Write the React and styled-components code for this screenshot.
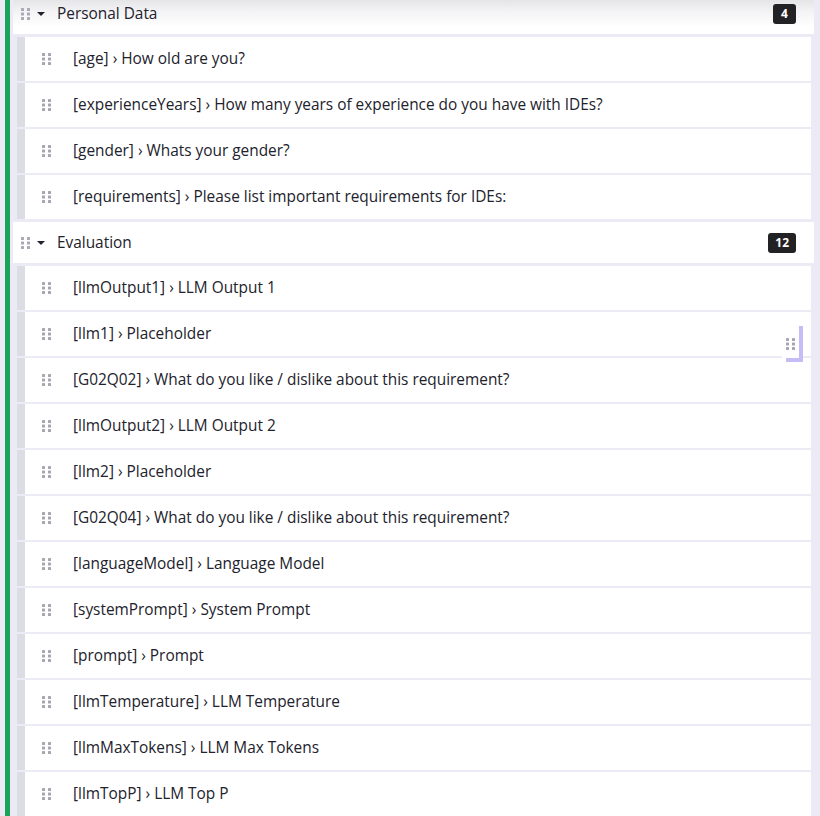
import React from "react";
import styled, { createGlobalStyle } from "styled-components";

const GlobalStyle = createGlobalStyle`
    html, body {
        margin: 0;
        padding: 0;
        background: #ecebf5;
        overflow: hidden;
    }
    body {
        font-family: "Open Sans", "Noto Sans", "Liberation Sans", sans-serif;
        color: #22222c;
    }
`;

const Page = styled.div`
    height: 816px;
    padding-left: 5px;
    box-sizing: border-box;
    overflow: hidden;
`;

const Board = styled.div`
    position: relative;
    min-height: 100%;
    border-left: 5px solid #1aa45b;
    padding: 0 6px 0 3px;
    margin-top: -7px;
    display: flex;
    flex-direction: column;
    gap: 3px;
`;

const Section = styled.section`
    display: flex;
    flex-direction: column;
    gap: 2px;
`;

const Header = styled.div`
    height: 41px;
    margin-bottom: 1px;
    display: flex;
    align-items: center;
    padding: 0 18px 0 8px;
    background: ${(p) =>
        p.$shaded
            ? "linear-gradient(#dcdce0 0px, #f3f3f5 18px, #ffffff 34px)"
            : "#ffffff"};
    font-size: 15.4px;
`;

const Caret = styled.span`
    width: 0;
    height: 0;
    margin: 0 12px 0 7px;
    border-left: 4px solid transparent;
    border-right: 4px solid transparent;
    border-top: 4px solid #22222c;
`;

const Title = styled.span`
    flex: 1;
    padding-bottom: 1px;
`;

const Badge = styled.span`
    min-width: 23px;
    height: 20px;
    padding: 0 7px;
    box-sizing: border-box;
    border-radius: 3px;
    background: #222224;
    color: #ffffff;
    font-size: 12px;
    font-weight: 700;
    display: flex;
    align-items: center;
    justify-content: center;
`;

const Row = styled.div`
    position: relative;
    height: 44px;
    margin: 0 3px 0 4px;
    display: flex;
    align-items: center;
    background: #ffffff;
    border-left: 8px solid #dcdce5;
    font-size: 15.4px;
`;

const RowHandle = styled.span`
    display: flex;
    margin: 0 22px 0 17px;
`;

const Label = styled.span`
    white-space: nowrap;
    padding-bottom: 1px;
`;

const DropMarker = styled.div`
    position: absolute;
    right: 8px;
    top: 14px;
    width: 21px;
    height: 36px;
    padding: 8px 0 0 4px;
    box-sizing: border-box;
    background: #ffffff;
    border-right: 4px solid #c5bdf5;
    z-index: 2;

    &::after {
        content: "";
        position: absolute;
        left: 4px;
        right: 0;
        bottom: 0;
        height: 4px;
        background: #c5bdf5;
    }
`;

function Dots({ color = "#a6a6b2" }) {
    return (
        <svg width="9" height="12" viewBox="0 0 9 12">
            {[0, 4.5, 9].map((y) =>
                [0, 6].map((x) => (
                    <rect key={`${x}-${y}`} x={x} y={y} width="3" height="3" rx="0.5" fill={color} />
                ))
            )}
        </svg>
    );
}

const sections = [
    {
        title: "Personal Data",
        shaded: true,
        items: [
            ["age", "How old are you?"],
            ["experienceYears", "How many years of experience do you have with IDEs?"],
            ["gender", "Whats your gender?"],
            ["requirements", "Please list important requirements for IDEs:"],
        ],
    },
    {
        title: "Evaluation",
        items: [
            ["llmOutput1", "LLM Output 1"],
            ["llm1", "Placeholder", true],
            ["G02Q02", "What do you like / dislike about this requirement?"],
            ["llmOutput2", "LLM Output 2"],
            ["llm2", "Placeholder"],
            ["G02Q04", "What do you like / dislike about this requirement?"],
            ["languageModel", "Language Model"],
            ["systemPrompt", "System Prompt"],
            ["prompt", "Prompt"],
            ["llmTemperature", "LLM Temperature"],
            ["llmMaxTokens", "LLM Max Tokens"],
            ["llmTopP", "LLM Top P"],
        ],
    },
];

export default function App() {
    return (
        <Page>
            <GlobalStyle />
            <Board>
                {sections.map((s) => (
                    <Section key={s.title}>
                        <Header $shaded={s.shaded}>
                            <Dots color="#a9a9b6" />
                            <Caret />
                            <Title>{s.title}</Title>
                            <Badge>{s.items.length}</Badge>
                        </Header>
                        {s.items.map(([code, text, dragging]) => (
                            <Row key={code}>
                                <RowHandle>
                                    <Dots />
                                </RowHandle>
                                <Label>
                                    [{code}] › {text}
                                </Label>
                                {dragging && (
                                    <DropMarker>
                                        <Dots />
                                    </DropMarker>
                                )}
                            </Row>
                        ))}
                    </Section>
                ))}
            </Board>
        </Page>
    );
}
